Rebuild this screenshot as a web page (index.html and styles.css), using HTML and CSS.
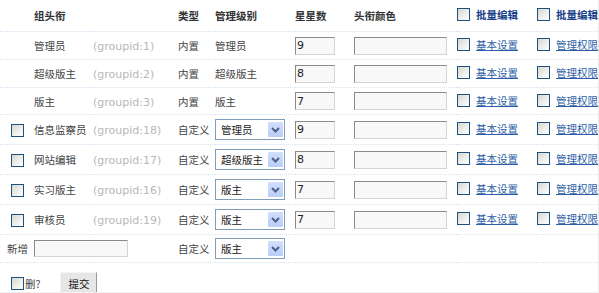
FILE: index.html
```html
<!DOCTYPE html>
<html lang="zh-CN">
<head>
<meta charset="utf-8">
<title>用户组</title>
<link rel="stylesheet" href="styles.css">
</head>
<body>
<div class="wrap">
<table class="grid">
  <colgroup>
    <col class="c1"><col class="c2"><col class="c3"><col class="c4"><col class="c5"><col class="c6"><col class="c7"><col class="c8"><col class="c9">
  </colgroup>
  <thead>
    <tr class="head">
      <th></th>
      <th colspan="2">组头衔</th>
      <th>类型</th>
      <th>管理级别</th>
      <th>星星数</th>
      <th>头衔颜色</th>
      <th><span class="cbl"><input type="checkbox" class="cb"><span class="bulk">批量编辑</span></span></th>
      <th><span class="cbl"><input type="checkbox" class="cb"><span class="bulk">批量编辑</span></span></th>
    </tr>
  </thead>
  <tbody>
    <tr class="row">
      <td></td>
      <td>管理员</td>
      <td><span class="gid">(groupid:1)</span></td>
      <td>内置</td>
      <td>管理员</td>
      <td><input class="ip stars" value="9"></td>
      <td><input class="ip color" value=""></td>
      <td><span class="cbl"><input type="checkbox" class="cb"><a href="#" class="lnk">基本设置</a></span></td>
      <td><span class="cbl"><input type="checkbox" class="cb"><a href="#" class="lnk">管理权限</a></span></td>
    </tr>
    <tr class="row">
      <td></td>
      <td>超级版主</td>
      <td><span class="gid">(groupid:2)</span></td>
      <td>内置</td>
      <td>超级版主</td>
      <td><input class="ip stars" value="8"></td>
      <td><input class="ip color" value=""></td>
      <td><span class="cbl"><input type="checkbox" class="cb"><a href="#" class="lnk">基本设置</a></span></td>
      <td><span class="cbl"><input type="checkbox" class="cb"><a href="#" class="lnk">管理权限</a></span></td>
    </tr>
    <tr class="row short">
      <td></td>
      <td>版主</td>
      <td><span class="gid">(groupid:3)</span></td>
      <td>内置</td>
      <td>版主</td>
      <td><input class="ip stars" value="7"></td>
      <td><input class="ip color" value=""></td>
      <td><span class="cbl"><input type="checkbox" class="cb"><a href="#" class="lnk">基本设置</a></span></td>
      <td><span class="cbl"><input type="checkbox" class="cb"><a href="#" class="lnk">管理权限</a></span></td>
    </tr>
    <tr class="row sel">
      <td><input type="checkbox" class="cb first"></td>
      <td>信息监察员</td>
      <td><span class="gid">(groupid:18)</span></td>
      <td>自定义</td>
      <td><span class="sbox"><select class="dd"><option selected>管理员</option><option>超级版主</option><option>版主</option></select><svg class="arr" width="15" height="15" viewBox="0 0 15 15"><path d="M4 6 L7.5 9.5 L11 6" fill="none" stroke="#4d6185" stroke-width="2"/></svg></span></td>
      <td><input class="ip stars" value="9"></td>
      <td><input class="ip color" value=""></td>
      <td><span class="cbl"><input type="checkbox" class="cb"><a href="#" class="lnk">基本设置</a></span></td>
      <td><span class="cbl"><input type="checkbox" class="cb"><a href="#" class="lnk">管理权限</a></span></td>
    </tr>
    <tr class="row sel">
      <td><input type="checkbox" class="cb first"></td>
      <td>网站编辑</td>
      <td><span class="gid">(groupid:17)</span></td>
      <td>自定义</td>
      <td><span class="sbox"><select class="dd"><option>管理员</option><option selected>超级版主</option><option>版主</option></select><svg class="arr" width="15" height="15" viewBox="0 0 15 15"><path d="M4 6 L7.5 9.5 L11 6" fill="none" stroke="#4d6185" stroke-width="2"/></svg></span></td>
      <td><input class="ip stars" value="8"></td>
      <td><input class="ip color" value=""></td>
      <td><span class="cbl"><input type="checkbox" class="cb"><a href="#" class="lnk">基本设置</a></span></td>
      <td><span class="cbl"><input type="checkbox" class="cb"><a href="#" class="lnk">管理权限</a></span></td>
    </tr>
    <tr class="row sel">
      <td><input type="checkbox" class="cb first"></td>
      <td>实习版主</td>
      <td><span class="gid">(groupid:16)</span></td>
      <td>自定义</td>
      <td><span class="sbox"><select class="dd"><option>管理员</option><option>超级版主</option><option selected>版主</option></select><svg class="arr" width="15" height="15" viewBox="0 0 15 15"><path d="M4 6 L7.5 9.5 L11 6" fill="none" stroke="#4d6185" stroke-width="2"/></svg></span></td>
      <td><input class="ip stars" value="7"></td>
      <td><input class="ip color" value=""></td>
      <td><span class="cbl"><input type="checkbox" class="cb"><a href="#" class="lnk">基本设置</a></span></td>
      <td><span class="cbl"><input type="checkbox" class="cb"><a href="#" class="lnk">管理权限</a></span></td>
    </tr>
    <tr class="row sel">
      <td><input type="checkbox" class="cb first"></td>
      <td>审核员</td>
      <td><span class="gid">(groupid:19)</span></td>
      <td>自定义</td>
      <td><span class="sbox"><select class="dd"><option>管理员</option><option>超级版主</option><option selected>版主</option></select><svg class="arr" width="15" height="15" viewBox="0 0 15 15"><path d="M4 6 L7.5 9.5 L11 6" fill="none" stroke="#4d6185" stroke-width="2"/></svg></span></td>
      <td><input class="ip stars" value="7"></td>
      <td><input class="ip color" value=""></td>
      <td><span class="cbl"><input type="checkbox" class="cb"><a href="#" class="lnk">基本设置</a></span></td>
      <td><span class="cbl"><input type="checkbox" class="cb"><a href="#" class="lnk">管理权限</a></span></td>
    </tr>
    <tr class="row newrow">
      <td class="newlbl">新增</td>
      <td colspan="2"><input class="ip newname" value=""></td>
      <td>自定义</td>
      <td><span class="sbox"><select class="dd"><option>管理员</option><option>超级版主</option><option selected>版主</option></select><svg class="arr" width="15" height="15" viewBox="0 0 15 15"><path d="M4 6 L7.5 9.5 L11 6" fill="none" stroke="#4d6185" stroke-width="2"/></svg></span></td>
      <td></td>
      <td></td>
      <td></td>
      <td></td>
    </tr>
  </tbody>
</table>
<div class="footer">
  <label class="del"><input type="checkbox" class="cb">删?</label>
  <button class="submit" type="button">提交</button>
</div>
</div>
</body>
</html>
```

FILE: styles.css
```css
html, body {
  margin: 0;
  padding: 0;
  background: #fff;
  overflow: hidden;
}
body {
  font-family: "Noto Sans CJK SC", "DejaVu Sans", sans-serif;
  font-size: 10.5px;
  color: #444;
}
.wrap {
  width: 598px;
  height: 292px;
  overflow: hidden;
  border-right: 1px solid #ececec;
  border-bottom: 1px solid #f0f0f0;
}
.grid {
  border-collapse: collapse;
  table-layout: fixed;
  width: 640px;
}
.c1 { width: 34px; }
.c2 { width: 59px; }
.c3 { width: 85px; }
.c4 { width: 37px; }
.c5 { width: 80px; }
.c6 { width: 59px; }
.c7 { width: 103px; }
.c8 { width: 80px; }
.c9 { width: 103px; }

.grid th,
.grid td {
  padding: 0;
  text-align: left;
  vertical-align: middle;
  white-space: nowrap;
  border-bottom: 1px dotted #d6e5f3;
}
.grid th {
  height: 31px;
  font-weight: bold;
  color: #333;
}
.row td { height: 27px; }
.row.short td { height: 26px; }
.row.sel td { height: 29px; }
.row.newrow td { height: 27px; }

.gid {
  font-family: "DejaVu Sans", sans-serif;
  font-size: 11px;
  color: #b8b8b8;
}
.newlbl { padding-left: 7px !important; }

.cb {
  -webkit-appearance: none;
  appearance: none;
  width: 13px;
  height: 13px;
  margin: 0;
  border: 1px solid #1c5180;
  background: linear-gradient(135deg, #d8d8d2 0%, #f4f4f0 70%, #ffffff 100%);
  vertical-align: middle;
  box-sizing: border-box;
}
.cb.first { margin-left: 11px; }
.cbl {
  display: inline-flex;
  align-items: center;
  gap: 6px;
}
.bulk {
  color: #17408a;
  font-weight: bold;
}
.lnk {
  color: #2b5ea6;
  text-decoration: underline;
}

.ip {
  box-sizing: border-box;
  height: 18px;
  margin: 0;
  padding: 0 0 0 1px;
  border: 1px solid;
  border-color: #8a8a8a #d4d4d4 #d4d4d4 #8a8a8a;
  background: #f8f8f8;
  font-family: "DejaVu Sans", sans-serif;
  font-size: 11px;
  color: #222;
  vertical-align: middle;
}
.stars { width: 40px; }
.color { width: 93px; }
.newname { width: 94px; height: 17px; }

.sbox {
  position: relative;
  display: inline-block;
  vertical-align: middle;
}
.dd {
  -webkit-appearance: none;
  appearance: none;
  box-sizing: border-box;
  width: 70px;
  height: 21px;
  margin: 0;
  padding: 0 0 0 5px;
  border: 1px solid #7f9db9;
  background: #fff;
  font-family: "Noto Sans CJK SC", sans-serif;
  font-size: 10.5px;
  color: #222;
  display: block;
}
.arr {
  position: absolute;
  right: 2px;
  top: 3px;
  width: 15px;
  height: 15px;
  background: linear-gradient(180deg, #d2defc 0%, #b9cdf8 100%);
  border-radius: 1px;
  pointer-events: none;
}

.footer {
  display: flex;
  align-items: center;
  gap: 20px;
  padding: 9px 0 0 11px;
}
.del {
  display: inline-flex;
  align-items: center;
  gap: 1px;
  color: #444;
}
.submit {
  width: 37px;
  height: 22px;
  margin: 0;
  padding: 0;
  border: 1px solid;
  border-color: #f4f4f4 #9a9a9a #9a9a9a #f4f4f4;
  background: #e6e6e6;
  font-family: "Noto Sans CJK SC", sans-serif;
  font-size: 10.5px;
  color: #111;
}
```
